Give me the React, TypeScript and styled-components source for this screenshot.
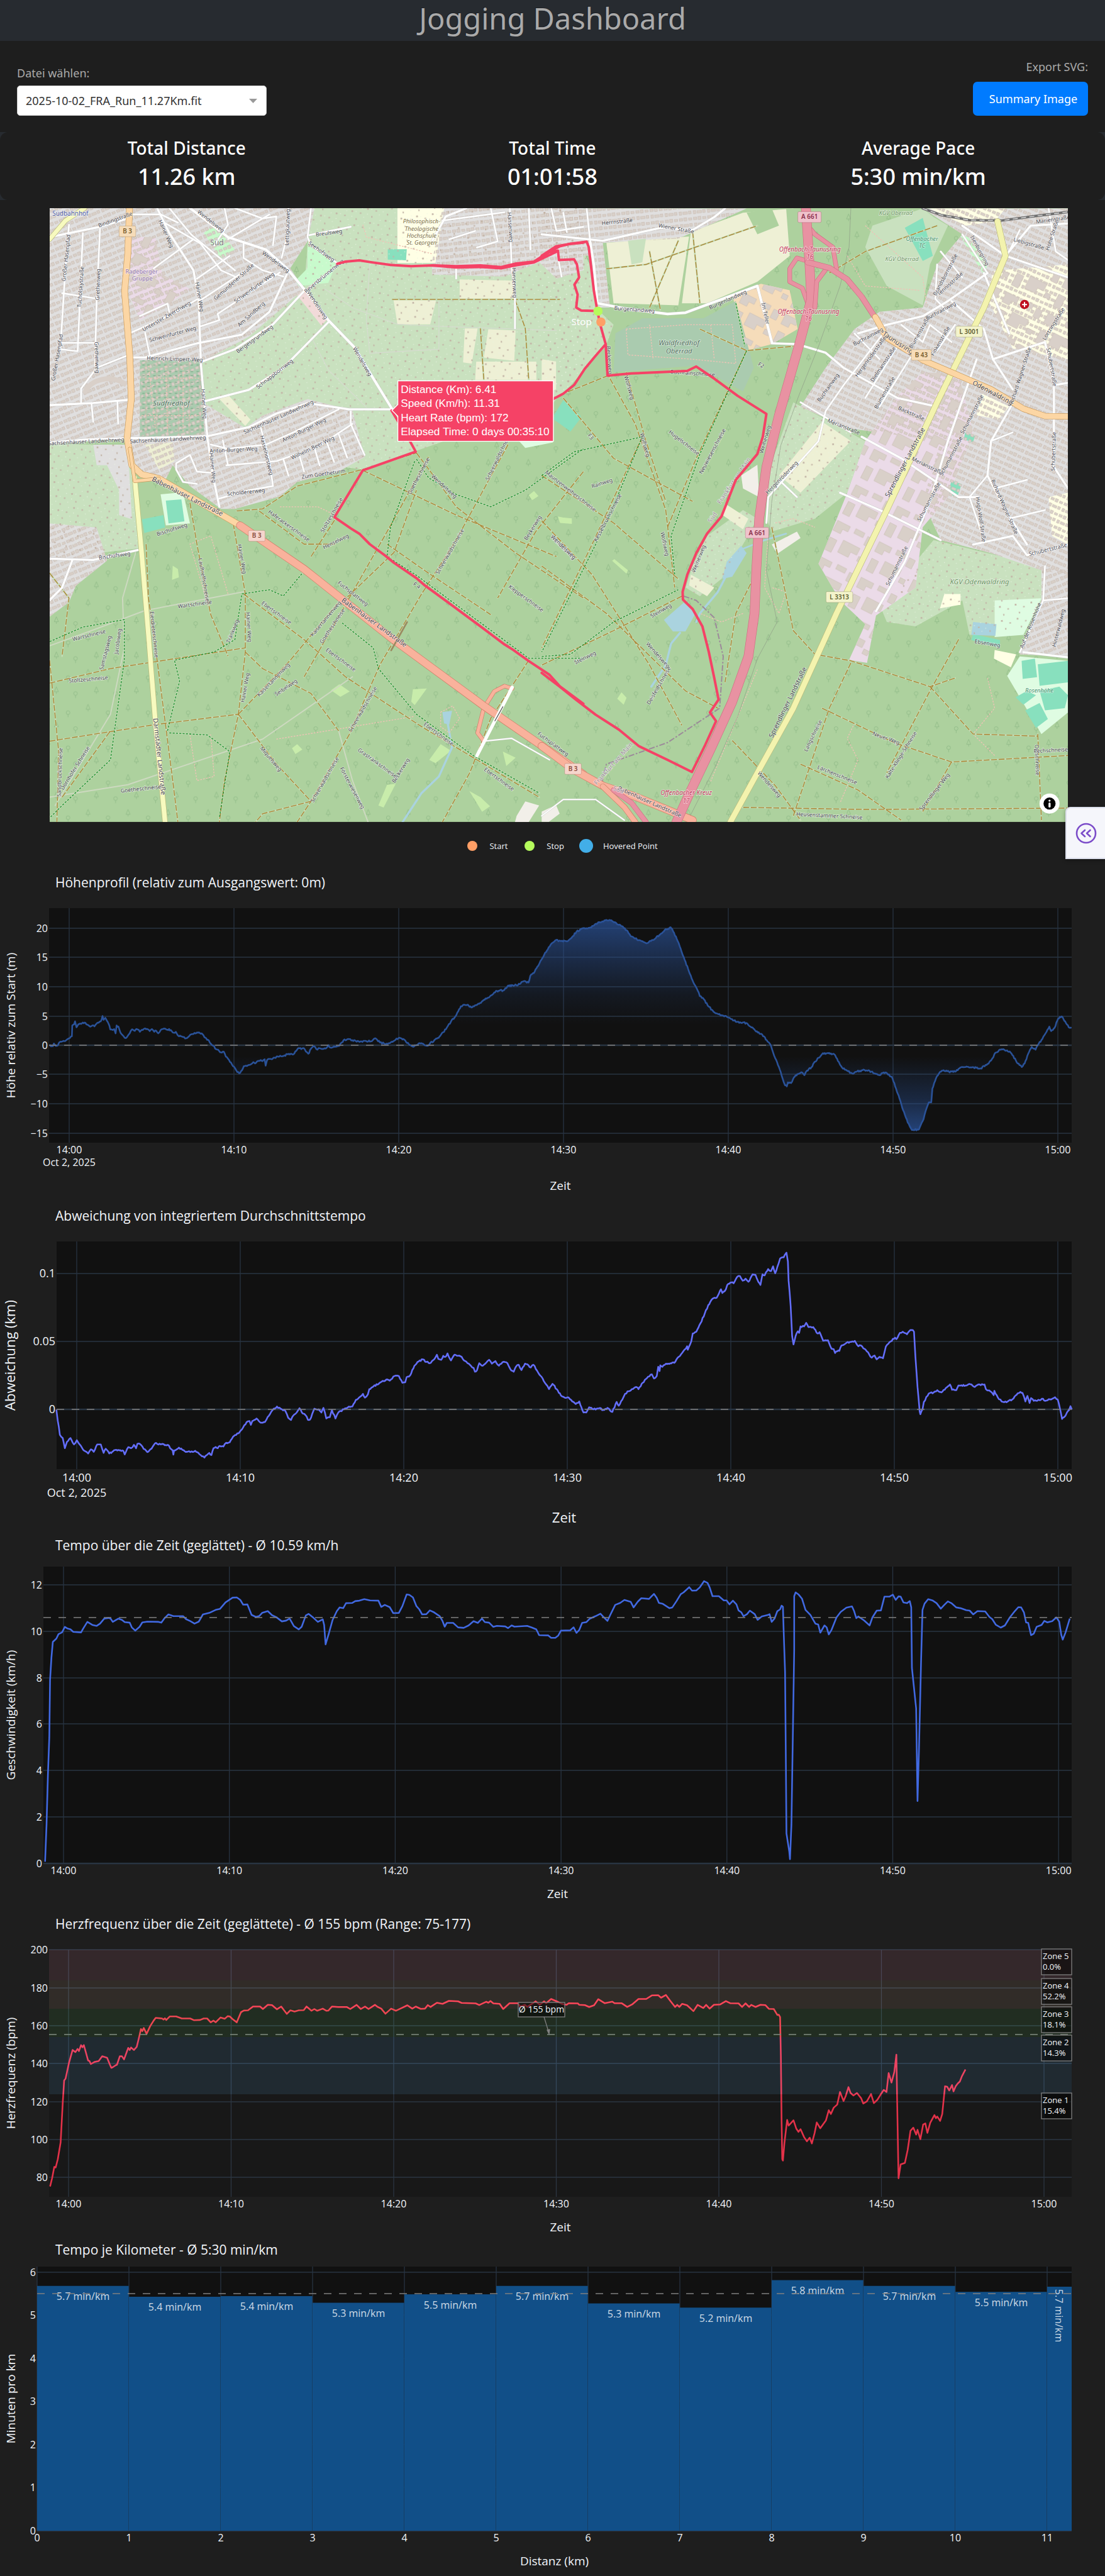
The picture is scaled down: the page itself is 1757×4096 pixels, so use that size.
import React from "react";
import styled, { createGlobalStyle } from "styled-components";

const GlobalStyle = createGlobalStyle`
  *, *::before, *::after { box-sizing: border-box; }
  body {
    margin: 0;
    background: #1e1e1e;
    color: #aaaaaa;
    font-family: "Noto Sans", "Liberation Sans", sans-serif;
    font-size: 18px;
  }
`;

/* ---------- page shell ---------- */

const Page = styled.main`
  position: relative;
  background: #272b30;
`;

const Header = styled.header`
  display: flex;
  justify-content: center;
  height: 65px;
  background: #272b30;
`;

const Title = styled.h1`
  margin: 0;
  font-size: 47px;
  font-weight: 400;
  line-height: 58px;
  color: #aaaaaa;
  text-shadow: -1px -1px 0 rgba(0, 0, 0, 0.3);
`;

const Toolbar = styled.section`
  display: flex;
  justify-content: space-between;
  align-items: flex-end;
  height: 145px;
  padding: 0 27px 26px;
  background: #1e1e1e;
`;

const Field = styled.div<{ $end?: boolean; $gap: number }>`
  display: flex;
  flex-direction: column;
  align-items: ${(p) => (p.$end ? "flex-end" : "flex-start")};
  gap: ${(p) => p.$gap}px;
  line-height: 24px;
`;

const SelectBox = styled.div`
  position: relative;
  width: 397px;
  svg {
    position: absolute;
    right: 15px;
    top: 20px;
    pointer-events: none;
  }
`;

const FileSelect = styled.select`
  appearance: none;
  width: 100%;
  height: 48px;
  padding: 0 13px;
  border: 1px solid #cccccc;
  border-radius: 5px;
  background: #ffffff;
  color: #333333;
  font: inherit;
`;

const ExportButton = styled.button`
  width: 183px;
  height: 54px;
  padding: 0 13px 0 22px;
  border: 0;
  border-radius: 7px;
  background: #007bff;
  color: #ffffff;
  font: inherit;
  white-space: nowrap;
`;

const Stats = styled.section`
  display: grid;
  grid-template-columns: repeat(3, 1fr);
  height: 108px;
  padding: 8px 6px 0;
  border-radius: 13px;
  background: #1e1e1e;
  color: #ffffff;
  text-align: center;
  text-shadow: 1px -1px 0 rgba(0, 0, 0, 0.3);
`;

const StatLabel = styled.h2`
  margin: 0;
  font-size: 28px;
  font-weight: 500;
  line-height: 34px;
`;

const StatValue = styled.p`
  margin: 0;
  font-size: 36px;
  font-weight: 500;
  line-height: 58px;
`;

const MapPanel = styled.section`
  padding: 13px 59px 0 79px;
  background: #1e1e1e;
`;

const MapCanvas = styled.svg`
  display: block;
  width: 100%;
  height: auto;
  font-family: "Noto Sans", sans-serif;
`;

const Legend = styled.ul`
  display: flex;
  justify-content: center;
  align-items: center;
  gap: 24px;
  height: 59px;
  margin: 0;
  padding: 17px 0 0 9px;
  list-style: none;
  color: #f2f5fa;
  font: 13px/20px "Open Sans", sans-serif;
`;

const LegendItem = styled.li`
  display: flex;
  align-items: center;
  gap: 16px;
`;

const Dot = styled.i<{ $color: string; $size: number }>`
  display: block;
  width: ${(p) => p.$size}px;
  height: ${(p) => p.$size}px;
  margin: 0 ${(p) => (22 - p.$size) / 2}px;
  border-radius: 50%;
  background: ${(p) => p.$color};
`;

const ChartPanel = styled.section`
  background: #1e1e1e;
  color: #f2f5fa;
  font-family: "Open Sans", "Noto Sans", sans-serif;
`;

const ChartTitle = styled.h2`
  margin: 0;
  padding: 22px 0 12px 88px;
  font-size: 21px;
  font-weight: 400;
  line-height: 30px;
`;

const ChartCanvas = styled.svg`
  display: block;
  width: 100%;
  height: auto;
  overflow: visible;
  font-family: "Open Sans", "Noto Sans", sans-serif;
  fill: #f2f5fa;
`;

const DrawerButton = styled.button`
  position: absolute;
  top: 1283px;
  right: 0;
  display: grid;
  place-items: center;
  width: 63px;
  height: 83px;
  padding: 0;
  border: 2px solid #dcdfeb;
  border-right: 0;
  border-radius: 8px 0 0 0;
  background: #f5f6fb;
  box-shadow: 0 2px 6px rgba(0, 0, 0, 0.3);
`;

/* ---------- drawing helpers ---------- */

type Frame = [number, number, number, number];
type Pt = [number, number];

const parse = (s: string, [ox, oy, sx, sy]: Frame): Pt[] =>
  s
    .trim()
    .split(/\s+/)
    .map((p) => {
      const [x, y] = p.split(",").map(Number);
      return [ox + x * sx, oy + y * sy];
    });

const toPath = (pts: Pt[]) =>
  "M" + pts.map(([x, y]) => x.toFixed(1) + " " + y.toFixed(1)).join("L");

const random = (seed: number) => () => {
  seed = (seed * 16807) % 2147483647;
  return seed / 2147483647;
};

const roughen = (pts: Pt[], amp: number, step: number): Pt[] => {
  const rnd = random(97);
  const out: Pt[] = [];
  for (let i = 0; i < pts.length - 1; i++) {
    const [x0, y0] = pts[i];
    const [x1, y1] = pts[i + 1];
    out.push(pts[i]);
    const n = Math.floor((x1 - x0) / step);
    for (let k = 1; k < n; k++) {
      const t = k / n;
      out.push([x0 + (x1 - x0) * t, y0 + (y1 - y0) * t + (rnd() - 0.5) * 2 * amp]);
    }
  }
  out.push(pts[pts.length - 1]);
  return out;
};

/* ---------- map ---------- */

const WEST: Frame = [100, 480, 0.8291, 0.9949];
const EAST: Frame = [1300, 480, 0.8622, 1.0332];
const frames = { w: WEST, e: EAST };
type Side = keyof typeof frames;

const areas: [Side, string, string][] = [
  // allotments
  ["w", "#c9e1bf", "780,20 1568,20 1568,400 1480,490 1085,605 930,650 470,600 465,390 760,215 770,110"],
  ["w", "#c9e1bf", "24,590 240,590 270,680 285,840 24,865"],
  ["e", "#c9e1bf", "0,20 60,20 150,180 150,250 200,290 178,340 60,450 0,470"],
  ["e", "#c9e1bf", "635,620 700,470 790,510 900,560 850,680 760,740 640,770 625,740"],
  ["e", "#c9e1bf", "460,780 560,720 600,740 560,800 500,880 440,920 400,900 420,850"],
  ["e", "#c9e1bf", "1090,790 1240,820 1400,850 1390,930 1330,1000 1190,1010 1170,930 1040,990 960,980 940,940 1060,820"],
  ["e", "#c9e1bf", "920,60 1060,20 1090,40 1130,60 1080,150 1060,245 960,200 900,110"],
  // residential
  ["w", "#e0dfdf", "24,20 790,20 770,100 720,165 760,215 600,330 465,390 470,490 590,550 640,520 770,480 900,508 935,620 860,655 740,680 690,715 560,745 520,745 430,690 380,640 350,690 275,650 240,575 24,590"],
  ["w", "#e0dfdf", "24,780 160,790 190,870 100,930 80,970 24,1005"],
  ["w", "#e0dfdf", "150,590 250,590 262,770 225,760 225,700 190,640 160,640"],
  ["w", "#e0dfdf", "1160,20 1568,20 1568,170 1490,190 1440,150 1340,185 1130,180 1130,150"],
  ["e", "#e0dfdf", "0,20 570,20 380,90 170,100 190,250 150,250 130,130 0,120"],
  ["e", "#e0dfdf", "1060,20 1464,20 1464,870 1390,860 1250,820 1110,790 1060,700 1110,560 850,530 720,480 790,390 870,300 940,260 1060,250 1100,150 1170,80"],
  ["e", "#e0dfdf", "1390,850 1464,860 1464,1060 1330,1055 1390,930"],
  // sites, schools, farmland
  ["w", "#ebdbe8", "260,90 330,90 350,180 430,215 370,250 285,290 255,230"],
  ["w", "#f2dad9", "740,230 760,215 830,285 810,303"],
  ["w", "#ffffe5", "1030,20 1165,20 1140,152 1030,152"],
  ["w", "#eef0d5", "1018,238 1142,242 1125,300 1030,300"],
  ["w", "#eef0d5", "1210,192 1368,195 1368,241 1210,240"],
  ["w", "#eef0d5", "1225,310 1262,310 1245,395 1220,392"],
  ["w", "#eef0d5", "1293,312 1372,315 1368,388 1280,380"],
  ["w", "#eef0d5", "1258,390 1432,390 1432,434 1255,434"],
  ["w", "#eef0d5", "515,480 540,470 605,530 590,545"],
  ["w", "#eef0d5", "300,590 380,585 385,630 340,650"],
  ["w", "#aacbaf", "285,387 460,387 472,565 285,575"],
  ["w", "#c8facc", "470,80 500,60 560,120 520,142"],
  ["w", "#c8facc", "770,110 855,150 830,200 745,208 735,195 770,165"],
  ["w", "#dffce2", "345,710 410,705 430,780 360,785"],
  ["w", "#88e0be", "360,725 405,722 414,775 368,780"],
  ["w", "#88e0be", "291,770 353,760 358,790 298,803"],
  ["w", "#88e0be", "1002,119 1057,119 1055,146 1002,144"],
  ["w", "#88e0be", "1508,487 1560,520 1530,558 1480,528"],
  ["w", "#dffce2", "1380,580 1480,540 1480,585 1400,598"],
  ["e", "#88e0be", "60,465 110,505 80,538 34,500"],
  ["e", "#f5dcba", "530,220 610,195 690,210 712,300 640,335 570,350"],
  ["e", "#eef0d5", "180,100 410,85 380,245 200,240"],
  ["e", "#eef0d5", "415,75 560,30 700,20 720,60 690,130 600,190 460,240 390,240"],
  ["e", "#c9e1bf", "240,95 290,90 280,145 250,150"],
  ["e", "#add19e", "570,30 640,20 660,60 600,80"],
  ["e", "#add19e", "680,20 730,20 735,120 690,130"],
  ["e", "#eef0d5", "780,515 860,560 720,680 660,640"],
  ["e", "#f2efe9", "640,800 710,770 720,785 655,822"],
  ["e", "#f2efe9", "555,640 600,615 605,690 560,670"],
  ["e", "#eef0d5", "510,705 575,740 560,765 500,730"],
  ["e", "#eef0d5", "415,870 480,900 460,920 410,895"],
  ["e", "#eef0d5", "0,370 40,375 40,440 0,450"],
  ["e", "#aacbaf", "205,310 280,275 450,275 540,235 590,390 560,445 430,385 200,400"],
  ["e", "#ebdbe8", "1060,400 1160,405 1200,540 1130,690 1060,760 1040,900 930,965 905,1075 855,1068 900,985 830,930 770,845 850,680 900,560 990,455"],
  ["e", "#ffffe5", "1255,165 1464,150 1464,370 1400,360 1310,345 1240,230"],
  ["e", "#ffffe5", "1225,450 1300,480 1270,510 1210,500"],
  ["e", "#ffffe5", "1410,690 1464,680 1464,800 1420,780"],
  ["e", "#ffffe5", "1120,915 1165,915 1165,940 1108,948"],
  ["e", "#ffffe5", "1260,1045 1320,1055 1305,1085 1258,1065"],
  ["e", "#ffffe5", "1080,20 1290,20 1260,50 1180,60"],
  ["e", "#dffce2", "1260,930 1390,925 1340,1010 1260,1015"],
  ["e", "#dffce2", "1330,1060 1464,1070 1464,1190 1390,1240 1295,1105"],
  ["e", "#88e0be", "1335,1070 1372,1065 1378,1108 1338,1112"],
  ["e", "#88e0be", "1380,1078 1464,1070 1464,1120 1385,1128"],
  ["e", "#88e0be", "1345,1185 1385,1168 1408,1205 1375,1226"],
  ["e", "#88e0be", "1385,1140 1440,1130 1464,1150 1455,1180 1400,1185"],
  ["e", "#88e0be", "1318,1155 1350,1140 1375,1150 1340,1172"],
  ["e", "#88e0be", "1010,65 1060,42 1088,130 1060,142"],
  ["e", "#88e0be", "1200,1008 1275,1022 1275,1040 1195,1022"],
  ["e", "#88e0be", "1178,540 1205,548 1200,563 1174,556"],
  ["e", "#88e0be", "1140,652 1168,660 1155,692 1130,680"],
  ["e", "#c8facc", "1165,85 1185,85 1240,150 1230,175"],
  ["w", "#c8ecab", "380,882 395,890 398,910 378,916"],
  ["w", "#c8ecab", "838,1182 862,1168 892,1185 865,1198"],
  ["w", "#c8ecab", "1075,1180 1115,1178 1080,1218 1070,1210"],
  ["w", "#c8ecab", "1155,1312 1185,1328 1140,1358 1122,1350"],
  ["w", "#c8ecab", "1335,1330 1372,1345 1345,1365"],
  ["w", "#c8ecab", "1000,1410 1025,1408 990,1465 975,1460"],
  ["w", "#c8ecab", "725,1322 740,1312 755,1325 735,1336"],
  ["w", "#c8ecab", "1238,1425 1270,1440 1298,1462 1275,1475"],
  ["w", "#c8ecab", "1410,712 1425,702 1438,714 1420,724"],
  ["w", "#c8ecab", "1495,765 1535,768 1530,780 1500,778"],
  ["e", "#c8ecab", "45,735 84,742 84,752 52,750"],
  ["e", "#c8ecab", "196,838 202,834 240,860 236,868"],
  ["e", "#c8ecab", "210,1158 222,1143 236,1156 228,1172"],
  ["w", "#f2efe9", "1375,1485 1400,1450 1440,1460 1410,1500 1370,1500"],
  ["e", "#f2efe9", "0,1420 40,1405 50,1425 20,1444 0,1444"],
  // water
  ["e", "#aad3df", "340,975 395,935 428,960 400,1002 365,1002"],
  ["e", "#aad3df", "515,840 555,803 570,820 530,875 502,880"],
  ["e", "#aad3df", "1200,980 1265,985 1262,1012 1195,1010"],
  ["w", "#aad3df", "1160,1235 1188,1232 1180,1265 1165,1262"],
];

const works =
  "1060,400 1160,405 1200,540 1130,690 1060,760 1040,900 930,965 905,1075 855,1068 900,985 830,930 770,845 850,680 900,560 990,455";

const builtUp: [Side, string, string][] = [
  ["w", "houseA", areas[7][2]],
  ["w", "houseB", areas[10][2]],
  ["w", "houseA", areas[8][2]],
  ["w", "shed", areas[0][2]],
  ["w", "shed", areas[1][2]],
  ["e", "shed", areas[2][2]],
  ["e", "houseB", areas[11][2]],
  ["e", "houseC", areas[12][2]],
  ["e", "houseA", areas[13][2]],
  ["e", "shed", areas[3][2]],
  ["e", "shed", areas[4][2]],
  ["e", "shed", areas[5][2]],
  ["e", "works", works],
  ["e", "works", "1255,165 1464,150 1464,370 1400,360 1310,345 1240,230"],
  ["w", "works", "260,90 330,90 350,180 430,215 370,250 285,290 255,230"],
  ["w", "graves", "285,387 460,387 472,565 285,575"],
  ["e", "works", "530,220 610,195 690,210 712,300 640,335 570,350"],
];

const streets: [Side, number, string][] = [
  ["w", 5, "24,90 170,65 250,45"],
  ["w", 4, "80,60 70,160 55,360 105,365 120,80"],
  ["w", 4, "170,65 160,240 155,400"],
  ["w", 4, "60,225 160,238"],
  ["w", 4, "55,345 155,345"],
  ["w", 5, "24,495 150,490 255,482"],
  ["w", 4, "115,490 115,455 160,405 250,375"],
  ["w", 5, "24,585 130,578 245,575 480,570 600,548 680,515 770,490 890,505 1010,505"],
  ["w", 5, "335,20 370,80 440,170 455,240 462,400 480,570 495,660 515,740"],
  ["w", 4, "265,35 345,35 395,55"],
  ["w", 4, "345,50 460,105 520,170 560,185"],
  ["w", 4, "325,165 440,95"],
  ["w", 4, "370,20 435,85 560,170"],
  ["w", 6, "430,20 540,90 650,120 710,165 765,220 830,290 905,355 960,430 1015,505"],
  ["w", 4, "500,110 540,60 530,20"],
  ["w", 4, "540,95 660,35"],
  ["w", 4, "560,20 640,45 680,40 670,110"],
  ["w", 4, "585,105 585,140 640,170 700,185"],
  ["w", 4, "450,190 545,135"],
  ["w", 4, "455,245 600,165"],
  ["w", 4, "460,305 515,290 510,275 690,175"],
  ["w", 5, "250,380 300,380 455,345 580,325 660,270 710,180"],
  ["w", 5, "465,390 560,360 670,300 760,220"],
  ["w", 4, "260,320 380,275 450,240"],
  ["w", 4, "300,320 315,380"],
  ["w", 4, "285,280 365,250 370,270"],
  ["w", 5, "475,485 600,458 700,405 830,295"],
  ["w", 4, "490,590 540,600 650,590 730,560 860,505"],
  ["w", 4, "535,640 680,630 800,595 900,540"],
  ["w", 4, "525,580 540,640"],
  ["w", 4, "635,550 660,630 670,690"],
  ["w", 4, "895,510 895,540 935,615"],
  ["w", 4, "515,720 600,700 670,690"],
  ["w", 4, "450,685 410,680 390,650 390,635 430,615 450,655 490,658"],
  ["w", 4, "700,625 715,665"],
  ["w", 4, "745,612 760,655"],
  ["w", 4, "790,597 805,640"],
  ["w", 4, "825,583 847,632"],
  ["w", 4, "860,565 885,622"],
  ["w", 4, "145,490 150,535"],
  ["w", 4, "220,485 222,540"],
  ["w", 5, "24,865 150,868 285,843"],
  ["w", 5, "90,868 60,935 24,965"],
  ["w", 4, "715,20 710,90 695,140"],
  ["w", 4, "780,20 770,90 780,110 860,155"],
  ["w", 4, "775,85 895,65"],
  ["w", 4, "860,155 770,215"],
  ["w", 5, "1130,100 1170,40 1230,20"],
  ["w", 4, "1180,95 1255,75"],
  ["w", 4, "1160,50 1340,30"],
  ["w", 4, "1260,115 1320,100 1300,20"],
  ["w", 4, "1355,20 1360,160 1370,230 1370,310"],
  ["w", 4, "1410,20 1415,120"],
  ["w", 4, "1475,20 1490,75 1568,65"],
  ["w", 4, "1490,120 1505,185"],
  ["w", 4, "1200,160 1200,190"],
  ["e", 5, "0,80 170,95 330,65 420,70 480,40 510,20"],
  ["e", 6, "135,98 145,150 155,240 230,252 350,265 400,262 600,200 640,330"],
  ["e", 4, "60,30 70,75"],
  ["e", 4, "125,20 135,98"],
  ["e", 5, "640,333 710,335 790,355 840,390 990,460 1100,480"],
  ["e", 5, "880,310 960,290 1060,270 1130,235 1240,170"],
  ["e", 5, "830,680 940,720 1110,790"],
  ["e", 5, "890,550 1000,600 1160,690 1215,690"],
  ["e", 5, "1210,370 1130,560 1080,700 1010,840 930,955"],
  ["e", 4, "1170,80 1240,170"],
  ["e", 5, "1170,60 1290,130 1360,60 1464,55"],
  ["e", 5, "1290,130 1464,180"],
  ["e", 4, "1330,70 1300,120"],
  ["e", 4, "1410,20 1430,120 1464,140"],
  ["e", 5, "1140,235 1230,300 1255,370 1310,440"],
  ["e", 4, "1100,150 1095,230 1130,260"],
  ["e", 4, "1110,120 1170,180"],
  ["e", 5, "1230,170 1300,310"],
  ["e", 5, "1255,370 1400,330 1425,430 1464,425"],
  ["e", 5, "1305,480 1250,560 1240,640 1290,720 1350,800"],
  ["e", 5, "1425,430 1425,620 1464,670"],
  ["e", 4, "1240,640 1190,690 1230,790"],
  ["e", 4, "1260,670 1350,650"],
  ["e", 4, "1300,740 1400,720"],
  ["e", 5, "1200,800 1310,780 1350,825 1464,800"],
  ["e", 4, "1250,560 1310,540"],
  ["e", 5, "1340,1050 1464,1062"],
  ["e", 4, "1400,850 1395,930 1464,925"],
  ["e", 4, "1395,930 1330,1050"],
  ["e", 4, "870,310 940,370"],
  ["e", 4, "950,310 840,430 790,490 770,560 630,690 625,750"],
  ["e", 4, "990,340 900,460"],
  ["e", 4, "1030,360 940,480"],
  ["e", 4, "1000,290 1060,330 1080,290 1140,330"],
  ["e", 4, "1150,290 1100,350"],
  ["e", 4, "720,470 860,540"],
  ["e", 4, "660,650 710,690"],
  ["e", 3, "0,1430 60,1392 150,1392 230,1440"],
  ["w", 3, "1280,1305 1360,1298 1470,1350"],
];

const tracks: [Side, string][] = [
  ["w", "565,750 640,745 740,690 930,650 1085,610"],
  ["w", "930,652 1200,760 1490,860"],
  ["w", "1085,610 1130,660 1200,740 1370,850 1568,960"],
  ["w", "1350,590 1200,820 1100,950 980,1120 890,1290 780,1450 740,1500"],
  ["w", "1568,655 1430,800 1320,960"],
  ["w", "1120,620 1000,800 870,990 760,1150"],
  ["w", "555,780 590,950 590,1090 570,1240 530,1400 515,1500"],
  ["w", "630,750 760,830 850,830"],
  ["w", "585,950 760,1060 880,1150 1100,1270 1440,1440"],
  ["w", "24,1165 200,1130 590,1080"],
  ["w", "24,1305 330,1265 570,1240"],
  ["w", "303,830 310,960 335,1110 380,1400 395,1500"],
  ["w", "430,730 450,830 490,1000 540,1100"],
  ["w", "570,1240 680,1360 780,1450"],
  ["w", "24,900 80,960 60,1100"],
  ["w", "24,1110 50,1330 45,1500"],
  ["w", "590,1090 640,1130 780,1190 860,1280"],
  ["w", "1410,1110 1300,1250 1240,1380 1160,1500"],
  ["w", "780,1450 640,1480 620,1500"],
  ["w", "60,1440 200,1280"],
  ["w", "570,1240 720,1110 870,960"],
  ["w", "870,970 1020,850 1085,700"],
  ["w", "1000,830 1120,900 1300,1000"],
  ["w", "780,860 850,770"],
  ["w", "1370,240 1400,310 1410,434"],
  ["w", "1015,240 1500,240"],
  ["w", "1270,310 1280,434"],
  ["e", "185,408 60,450"],
  ["e", "180,400 260,520 345,720 370,900"],
  ["e", "235,400 290,560 345,700"],
  ["e", "570,350 430,600 350,760"],
  ["e", "0,640 200,750 380,880"],
  ["e", "60,460 200,600 420,700"],
  ["e", "280,550 140,800 0,1040"],
  ["e", "0,850 180,960 400,1140 490,1180"],
  ["e", "0,745 140,870 300,1080 390,1220"],
  ["e", "390,920 200,1000 0,1080"],
  ["e", "600,860 540,960 510,1120"],
  ["e", "640,760 700,1000 760,1055 860,1070 1080,1130 1150,1110"],
  ["e", "860,1075 800,1180 700,1430"],
  ["e", "780,1180 980,1260 1140,1305 1464,1290"],
  ["e", "1160,1020 1080,1140 960,1330"],
  ["e", "720,1310 880,1370 1000,1440"],
  ["e", "530,1255 650,1360 720,1440"],
  ["e", "1380,1240 1390,1440"],
  ["e", "1080,1130 1200,1240 1380,1245"],
  ["e", "540,1410 900,1415 1464,1412"],
  ["e", "1140,1305 1060,1420"],
  ["e", "180,160 290,150 600,60"],
  ["e", "300,120 330,255"],
  ["e", "420,75 440,240"],
  ["e", "380,95 300,250"],
  ["e", "440,300 570,350 700,340"],
  ["e", "800,170 900,120 1100,60"],
];

const cycleways: [Side, string][] = [
  ["w", "24,1065 120,1030 240,1012 240,1110 200,1350 60,1460 24,1490"],
  ["w", "370,1285 480,1290 545,1330 515,1490"],
  ["w", "365,1280 400,1160 385,1110 500,1090 560,1060 580,950 660,940 700,955 755,900"],
  ["w", "870,1020 960,1080 975,1130 1085,1240 1250,1340 1440,1430"],
  ["w", "1085,625 1120,670 1200,710 1300,740 1400,700 1500,640 1568,600"],
  ["w", "1080,630 1010,790 1000,860 1085,905 1190,970 1410,1105 1568,1105"],
  ["e", "0,640 90,585 280,550"],
  ["e", "280,550 180,750 60,950 0,1050"],
  ["e", "570,350 440,590 360,780 370,870"],
  ["e", "0,1060 80,1055 200,980 380,905"],
  ["e", "540,240 565,340"],
];

const footpaths: [Side, string][] = [
  ["w", "430,1290 450,1400 500,1390 490,1290 440,1290"],
  ["w", "490,1000 430,830 490,810 540,950"],
  ["w", "680,1300 900,1270 1080,1245"],
  ["w", "930,60 940,90 1130,130"],
  ["w", "690,740 800,740 850,760"],
  ["w", "1155,1235 1190,1220 1210,1250 1180,1285 1155,1270 1155,1235"],
  ["w", "310,400 330,550"],
  ["w", "360,400 365,560"],
  ["w", "410,400 410,560"],
  ["w", "300,430 460,430"],
  ["w", "290,520 460,520"],
  ["e", "235,300 400,290 530,290 540,380 420,370 240,360 235,300"],
  ["e", "300,290 310,370"],
  ["e", "470,290 480,370"],
  ["e", "900,60 1060,180 1070,240"],
  ["e", "850,130 900,200 1050,210"],
  ["e", "650,750 700,740 760,760"],
  ["e", "560,960 500,980 440,960"],
  ["e", "630,780 620,900 660,960 680,910 640,900"],
  ["e", "870,1215 850,1250 880,1300 830,1400"],
  ["e", "1240,1110 1260,1180 1200,1240 1260,1290"],
  ["e", "470,1350 600,1090"],
];

const run =
  "178,335 183,408 250,403 330,400 405,397 430,387 480,415 545,455 625,497 615,550 600,590 540,650 500,735 460,775 430,820 405,870 392,910 393,928 420,950 447,990 465,1050 480,1110 492,1160 468,1190 485,1210 455,1265 418,1328 350,1300 270,1268 215,1230 150,1195 95,1160 50,1130 0,1098";

const runTraces: [Side, string][] = [
  ["w", "856,154 880,149 920,146 950,150 1010,157 1070,160 1130,158 1200,160 1270,158 1330,162 1370,154 1425,149 1460,130 1500,112 1530,106 1568,103"],
  ["w", "1130,158 1200,163 1270,162 1330,165 1370,158 1425,151 1490,125"],
  ["e", "0,134 20,122 45,118 48,140 90,138 98,150 104,180 91,197 100,220 96,250 110,257 155,258"],
  ["e", "0,130 40,108 80,102 125,97 131,110 138,160 145,210 155,258 163,290 178,335 150,362 120,392 90,430 60,450 30,463"],
  ["e", run],
  ["w", "1568,1215 1500,1173 1470,1145 1410,1112 1365,1085 1340,1072 1260,1022 1195,982 1110,930 1085,912 1020,875 995,858 950,830 920,805 895,792 848,765 930,652 1083,607 1065,580 1013,508"],
];

const mapLabels: [string, Side, number, number, number, number][] = [
  ["Babenhäuser Landstraße", "w", 422, 716, 27, 16],
  ["Babenhäuser Landstraße", "w", 962, 1020, 36, 16],
  ["Darmstädter Landstraße", "w", 340, 1342, 84, 16],
  ["Eierdieterschneise", "w", 326, 1048, 84, 13],
  ["Sachsenhäuser Landwehrweg", "w", 130, 583, -3, 13],
  ["Sachsenhäuser Landwehrweg", "w", 366, 578, -3, 13],
  ["Sachsenhäuser Landwehrweg", "w", 686, 524, -24, 13],
  ["Heinrich-Limpert-Weg", "w", 386, 384, 2, 13],
  ["Schweinfurter Weg", "w", 380, 324, -15, 13],
  ["Unterster Zwerchweg", "w", 362, 281, -30, 13],
  ["Bergesgrundweg", "w", 617, 336, -36, 13],
  ["Am Sandberg", "w", 607, 276, -42, 13],
  ["Gemündener Straße", "w", 557, 198, -42, 13],
  ["Schweinfurter Weg", "w", 616, 212, -36, 13],
  ["Schnappbornweg", "w", 675, 420, -38, 13],
  ["Wendelsweg", "w", 490, 52, 38, 13],
  ["Wendelsweg", "w", 678, 150, 36, 13],
  ["Wendelsweg", "w", 798, 254, 56, 13],
  ["Wendelsweg", "w", 928, 390, 60, 13],
  ["Hainer Weg", "w", 360, 82, 66, 13],
  ["Hainer Weg", "w", 457, 234, 80, 13],
  ["Hainer Weg", "w", 470, 492, 86, 13],
  ["Hainer Weg", "w", 495, 646, 84, 13],
  ["Hainer Weg", "w", 580, 866, 80, 13],
  ["Hainer Weg", "w", 600, 1030, 86, 13],
  ["Hainer Weg", "w", 590, 1176, -80, 13],
  ["Anton-Burger-Weg", "w", 760, 555, -26, 13],
  ["Anton-Burger-Weg", "w", 556, 603, -3, 13],
  ["Wilhelm-Beer-Weg", "w", 785, 598, -26, 13],
  ["Hasselhorstweg", "w", 651, 616, 76, 13],
  ["Zum Goetheturm", "w", 816, 661, -8, 13],
  ["Scholdererweg", "w", 592, 705, -6, 13],
  ["Bischofsweg", "w", 378, 795, -18, 13],
  ["Bischofsweg", "w", 212, 858, -8, 13],
  ["Wartschneise", "w", 444, 975, -8, 13],
  ["Wartschneise", "w", 138, 1050, -14, 13],
  ["Stoltzeschneise", "w", 136, 1156, -5, 13],
  ["Goetheschneise", "w", 288, 1420, -6, 13],
  ["Dornhöfer Schneise", "w", 98, 1370, -58, 13],
  ["Sandbruckschneise", "w", 54, 1380, -88, 13],
  ["Samstagsweg", "w", 186, 1092, -76, 13],
  ["Jacobiweg", "w", 222, 1064, -82, 13],
  ["Lauftreffschneise", "w", 470, 916, 80, 13],
  ["Haferackerschneise", "w", 716, 786, 36, 13],
  ["Henselweg", "w", 852, 824, -26, 13],
  ["Stoltzeschneise", "w", 840, 760, -60, 13],
  ["Fuchsplattweg", "w", 901, 949, 38, 13],
  ["Fuchsplattweg", "w", 1480, 1312, 36, 13],
  ["Ebertschneise", "w", 680, 996, 36, 13],
  ["Ebertschneise", "w", 866, 1109, 36, 13],
  ["Ebertschneise", "w", 1149, 1288, 36, 13],
  ["Ebertschneise", "w", 1324, 1397, 36, 13],
  ["Kaisertannenweg", "w", 823, 1010, -50, 13],
  ["Kaisertannenweg", "w", 672, 1157, -46, 13],
  ["Goetheschneise", "w", 842, 1028, -56, 13],
  ["Goetheschneise", "w", 1092, 666, -62, 13],
  ["Seibelweg", "w", 708, 1176, -34, 13],
  ["Tränkweg", "w", 554, 1040, -68, 13],
  ["Scheerwaldschneise", "w", 930, 1228, -60, 13],
  ["Scheerwaldschneise", "w", 1182, 848, -60, 13],
  ["Scheerwaldschneise", "w", 1322, 620, -64, 13],
  ["Scheerwaldschneise", "w", 820, 1398, -60, 13],
  ["Beckerweg", "w", 1422, 791, -58, 13],
  ["Beckerweg", "w", 1040, 1376, -58, 13],
  ["Wendelsweg", "w", 1165, 691, 42, 13],
  ["Wendelsweg", "w", 1509, 838, 44, 13],
  ["Klepperschneise", "w", 1402, 961, 36, 13],
  ["Grastränkschneise", "w", 972, 1358, 36, 13],
  ["Försterwiesenweg", "w", 899, 1418, 62, 13],
  ["Miquelsweg", "w", 664, 1348, 50, 13],
  ["F 4", "w", 1086, 930, 32, 13],
  ["Seehofsweg", "w", 810, 125, 36, 13],
  ["Breulsweg", "w", 832, 80, -8, 13],
  ["Reversbrunnenweg", "w", 818, 184, -40, 13],
  ["Tucholskystraße", "w", 114, 210, -86, 13],
  ["Großer Hasenpfad", "w", 72, 140, -84, 13],
  ["Großer Hasenpfad", "w", 46, 380, -80, 13],
  ["Grethenweg", "w", 164, 204, -88, 13],
  ["Grethenweg", "w", 160, 380, 88, 13],
  ["Bindingstraße", "w", 214, 48, -20, 13],
  ["Hansenweg", "w", 1356, 66, 86, 13],
  ["Hansenweg", "w", 1368, 200, 88, 13],
  ["Lettigkautweg", "w", 712, 66, -88, 13],
  ["Wiener Straße", "e", 374, 67, 10, 13],
  ["Herrnstraße", "e", 210, 51, -6, 13],
  ["Burgenlandweg", "e", 258, 255, 4, 13],
  ["Burgenlandweg", "e", 518, 232, -24, 13],
  ["Im Teller", "e", 622, 264, 78, 13],
  ["Buchrainschneise", "e", 420, 403, 4, 13],
  ["Wolfsweg", "e", 243, 436, 74, 13],
  ["Wolfsweg", "e", 287, 569, 74, 13],
  ["Wolfsweg", "e", 342, 799, 78, 13],
  ["Hugelschneise", "e", 396, 564, 38, 13],
  ["Neuwiesenschneise", "e", 475, 584, -62, 13],
  ["Kesselbruchschneise", "e", 184, 738, -62, 13],
  ["Maunzenweiherschneise", "e", 80, 676, 38, 13],
  ["Rainweg", "e", 168, 658, -18, 13],
  ["Wendelsweg", "e", 60, 806, 44, 13],
  ["Wendelsweg", "e", 323, 1057, 48, 13],
  ["Wendelsweg", "e", 633, 1357, 48, 13],
  ["Steinweg", "e", 332, 954, -30, 13],
  ["Steinweg", "e", 121, 1063, -26, 13],
  ["Deisfeldschneise", "e", 326, 1128, -60, 13],
  ["Weiherweg", "e", 622, 556, -74, 13],
  ["Weiherweg", "e", 437, 833, -68, 13],
  ["Hergenröderweg", "e", 668, 645, -46, 13],
  ["Hergenröderstraße", "e", 915, 364, -54, 13],
  ["Dielmannstraße", "e", 950, 382, -56, 13],
  ["Blumenstraße", "e", 954, 448, -60, 13],
  ["Blumenstraße", "e", 1051, 308, -60, 13],
  ["Finkenstraße", "e", 1109, 328, -60, 13],
  ["Buchrainweg", "e", 1110, 258, -28, 13],
  ["Buchrainweg", "e", 908, 318, -28, 13],
  ["Buchrainweg", "e", 797, 436, -54, 13],
  ["Merianstraße", "e", 840, 527, 22, 13],
  ["Merianstraße", "e", 1073, 618, 26, 13],
  ["Backstraße", "e", 1028, 496, 24, 13],
  ["Schumannstraße", "e", 1197, 498, -62, 13],
  ["Schumannstraße", "e", 1139, 595, -62, 13],
  ["Schumannstraße", "e", 1077, 701, -62, 13],
  ["Schumannstraße", "e", 988, 850, -64, 13],
  ["Sprendlinger Landstraße", "e", 1012, 610, -62, 16],
  ["Sprendlinger Landstraße", "e", 686, 1167, -64, 16],
  ["Taunusring", "e", 990, 333, 34, 16],
  ["Odenwaldring", "e", 1254, 449, 28, 16],
  ["Tennisstraße", "e", 1136, 195, -42, 13],
  ["Brandsbornstraße", "e", 1123, 174, -62, 13],
  ["Isenburgring", "e", 1218, 118, 62, 13],
  ["Liebigstraße", "e", 1355, 102, 16, 13],
  ["Hohe Straße", "e", 1420, 82, -72, 13],
  ["Marienstraße", "e", 1422, 46, -8, 13],
  ["Richard-Wagner-Straße", "e", 1332, 408, -72, 13],
  ["Richard-Wagner-Straße", "e", 1287, 713, 66, 13],
  ["Schubertstraße", "e", 1418, 388, 80, 13],
  ["Schubertstraße", "e", 1424, 584, -88, 13],
  ["Schubertstraße", "e", 1408, 812, -14, 13],
  ["Lortzingstraße", "e", 1424, 288, -58, 13],
  ["Hugo-Wolf-Straße", "e", 1221, 742, 82, 13],
  ["Auf der Rosenhöhe", "e", 1360, 988, -68, 13],
  ["Hinterwaldweg", "e", 1438, 994, -76, 13],
  ["Ebsenweg", "e", 1240, 1030, 10, 13],
  ["Langschneise", "e", 755, 1244, -64, 13],
  ["Neuer Weg", "e", 958, 1250, 20, 13],
  ["Lärchenschneise", "e", 822, 1335, 22, 13],
  ["Kalte-Klinge-Schneise", "e", 1000, 1289, -58, 13],
  ["Sprendlinger Weg", "e", 1093, 1374, -52, 13],
  ["Heusenstammer Schneise", "e", 800, 1430, 3, 13],
  ["Ostschneise", "e", 1378, 1300, 88, 13],
  ["Pechschneise", "e", 1416, 1278, -3, 13],
  ["F3", "e", 136, 550, 50, 13],
  ["F2", "e", 610, 384, 30, 13],
  ["Beckerweg", "e", 188, 372, 86, 13],
  ["Babenhäuser Landstraße", "e", 300, 1398, 24, 14],
];

const placeNames: [string, Side, number, number, number, string, boolean][] = [
  ["Süd", "w", 508, 110, 18, "#777777", false],
  ["Radeberger", "w", 290, 178, 14, "#8d6da8", false],
  ["Gruppe", "w", 292, 195, 14, "#8d6da8", false],
  ["Südfriedhof", "w", 376, 496, 17, "#4f6f5b", true],
  ["Philosophisch-", "w", 1100, 57, 14, "#7d7040", true],
  ["Theologische", "w", 1100, 74, 14, "#7d7040", true],
  ["Hochschule", "w", 1100, 91, 14, "#7d7040", true],
  ["St. Georgen", "w", 1100, 108, 14, "#7d7040", true],
  ["Waldfriedhof", "e", 382, 338, 17, "#4f6f5b", true],
  ["Oberrad", "e", 382, 357, 17, "#4f6f5b", true],
  ["KGV Oberrad", "e", 985, 36, 14, "#6a9460", true],
  ["KGV Oberrad", "e", 1002, 142, 14, "#6a9460", true],
  ["KGV Odenwaldring", "e", 1218, 893, 17, "#6a9460", true],
  ["Offenbacher", "e", 1058, 95, 14, "#3a8f68", true],
  ["TC", "e", 1058, 111, 14, "#3a8f68", true],
  ["Rosenhöhe", "e", 1384, 1144, 14, "#3a8f68", true],
  ["Offenbach-Taunusring", "e", 746, 120, 15, "#c4355a", true],
  ["16", "e", 746, 137, 15, "#c4355a", true],
  ["Offenbach-Taunusring", "e", 742, 264, 15, "#c4355a", true],
  ["16", "e", 742, 281, 15, "#c4355a", true],
  ["Offenbacher Kreuz", "e", 402, 1382, 15, "#c4355a", true],
  ["17", "e", 402, 1400, 15, "#c4355a", true],
  ["Südbahnhof", "w", 84, 38, 15, "#4a5aa8", false],
];

const boundaryNames: [string, number, number, number][] = [
  ["Frankfurt am Main", 540, 655, -56],
  ["Süd", 480, 740, -56],
  ["Frankfurt am Main", 204, 1312, -48],
  ["Süd", 212, 1374, 20],
];

const shields: [string, Side, number, number, string, string][] = [
  ["B 3", "w", 249, 76, "#f6dcb8", "#7a5c2c"],
  ["B 3", "w", 623, 810, "#f6d5cc", "#8a4a38"],
  ["B 3", "e", 87, 1321, "#f6d5cc", "#8a4a38"],
  ["A 661", "e", 745, 40, "#efc2cc", "#8a2f4a"],
  ["A 661", "e", 599, 773, "#efc2cc", "#8a2f4a"],
  ["B 43", "e", 1056, 360, "#f6dcb8", "#7a5c2c"],
  ["L 3001", "e", 1189, 306, "#f3f3cb", "#5e5e30"],
  ["L 3313", "e", 828, 922, "#f3f3cb", "#5e5e30"],
];

const Stroke = ({ side, pts, color, width, dash }: { side: Side; pts: string; color: string; width: number; dash?: string }) => (
  <path
    d={toPath(parse(pts, frames[side]))}
    fill="none"
    stroke={color}
    strokeWidth={width}
    strokeDasharray={dash}
    strokeLinejoin="round"
    strokeLinecap={dash ? "butt" : "round"}
  />
);

const Cased = ({ side, pts, fill, edge, width }: { side: Side; pts: string; fill: string; edge: string; width: number }) => (
  <>
    <Stroke side={side} pts={pts} color={edge} width={width + 2} />
    <Stroke side={side} pts={pts} color={fill} width={width} />
  </>
);

const Houses = ({ id, angle }: { id: string; angle: number }) => (
  <pattern id={id} width="34" height="30" patternUnits="userSpaceOnUse" patternTransform={`rotate(${angle})`}>
    <g fill="#d9d0c9" stroke="#c3b5aa" strokeWidth="0.8">
      <rect x="2" y="3" width="8" height="6" />
      <rect x="13" y="2" width="7" height="8" />
      <rect x="24" y="4" width="8" height="5" />
      <rect x="3" y="17" width="6" height="8" />
      <rect x="12" y="18" width="11" height="6" />
      <rect x="26" y="17" width="6" height="7" />
    </g>
  </pattern>
);

const tooltipLines = [
  "Distance (Km): 6.41",
  "Speed (Km/h): 11.31",
  "Heart Rate (bpm): 172",
  "Elapsed Time: 0 days 00:35:10",
];

const RouteMap = () => (
  <MapCanvas viewBox="120 500 2442 1472" role="img" aria-label="Laufstrecke">
    <defs>
      <Houses id="houseA" angle={-22} />
      <Houses id="houseB" angle={-6} />
      <Houses id="houseC" angle={24} />
      <pattern id="shed" width="38" height="34" patternUnits="userSpaceOnUse" patternTransform="rotate(-8)">
        <g fill="#c2b3a5">
          <rect x="5" y="6" width="4" height="4" />
          <rect x="24" y="14" width="4" height="3" />
          <rect x="12" y="26" width="3" height="4" />
        </g>
        <g fill="#e8f4e2">
          <circle cx="16" cy="10" r="1" />
          <circle cx="32" cy="5" r="1" />
          <circle cx="4" cy="20" r="1" />
          <circle cx="32" cy="26" r="1" />
        </g>
      </pattern>
      <pattern id="works" width="112" height="96" patternUnits="userSpaceOnUse" patternTransform="rotate(27)">
        <g fill="#d9d0c9" stroke="#cbbeb6" strokeWidth="1">
          <path d="M6 8h34v14h-14v12h-20z" />
          <rect x="54" y="6" width="24" height="12" />
          <rect x="88" y="10" width="16" height="22" />
          <rect x="8" y="52" width="18" height="32" />
          <path d="M40 44h44v18h-16v14h-28z" />
          <rect x="90" y="62" width="14" height="12" />
        </g>
      </pattern>
      <pattern id="graves" width="26" height="26" patternUnits="userSpaceOnUse">
        <path d="M4 8h6M16 8h6M4 18h6M16 18h6" stroke="#7fae8c" strokeWidth="2" />
        <path d="M13 0v26" stroke="#e7a79f" strokeWidth="1" strokeDasharray="3 2" />
      </pattern>
      <pattern id="trees" width="96" height="84" patternUnits="userSpaceOnUse">
        <g fill="none" stroke="#8fb986" strokeWidth="1.3">
          <path d="M20 10l-5 12h10zM20 22v5" />
          <circle cx="68" cy="30" r="4.5" />
          <path d="M68 34v7" />
          <path d="M40 52l-5 12h10zM40 64v5" />
          <circle cx="86" cy="68" r="4.5" />
          <path d="M86 72v7" />
        </g>
      </pattern>
    </defs>

    <rect x="120" y="500" width="2442" height="1472" fill="#add19e" />
    <rect x="120" y="500" width="2442" height="1472" fill="url(#trees)" />
    {areas.map(([side, fill, pts], i) => (
      <path key={i} d={toPath(parse(pts, frames[side])) + "Z"} fill={fill} />
    ))}
    {builtUp.map(([side, id, pts], i) => (
      <path key={i} d={toPath(parse(pts, frames[side])) + "Z"} fill={`url(#${id})`} />
    ))}

    <Stroke side="e" pts="515,870 490,910 440,960 430,980" color="#aad3df" width={5} />
    <Stroke side="e" pts="560,810 620,790 680,775" color="#aad3df" width={4} />
    <Stroke side="e" pts="385,1005 360,1030 345,1080 305,1130" color="#aad3df" width={5} />
    <Stroke side="w" pts="1175,1260 1188,1320 1150,1390 1100,1430 1045,1500" color="#aad3df" width={5} />
    <path d="M204 944a58 44 0 0 1 100-20" fill="none" stroke="#d9d0c9" strokeWidth="12" />

    {footpaths.map(([side, pts], i) => (
      <Stroke key={i} side={side} pts={pts} color="#efc3b6" width={2} dash="4 3" />
    ))}
    <Stroke side="w" pts="24,1075 140,1040 300,990 585,945" color="#cdd9c0" width={3} />
    <Stroke side="w" pts="24,1440 250,1410 640,1300 900,1150" color="#cdd9c0" width={3} />
    <Stroke side="w" pts="273,850 235,960 240,1080 200,1240 40,1460" color="#cdd9c0" width={3} />
    <Stroke side="w" pts="860,1280 900,1400 945,1500" color="#cdd9c0" width={3} />
    <Stroke side="w" pts="820,215 900,260 1030,300 1150,305 1490,315" color="#d5dcce" width={2} />
    <Stroke side="w" pts="950,150 940,290 950,370 1150,360 1150,240" color="#d5dcce" width={2} />
    <Stroke side="w" pts="780,330 830,410 940,500" color="#d5dcce" width={2} />
    {[...tracks, ...cycleways].map(([side, pts], i) => (
      <Stroke key={i} side={side} pts={pts} color="#c4dcb5" width={4} />
    ))}
    {tracks.map(([side, pts], i) => (
      <Stroke key={i} side={side} pts={pts} color="#ac8331" width={2} dash="14 4" />
    ))}
    {cycleways.map(([side, pts], i) => (
      <Stroke key={i} side={side} pts={pts} color="#1f9130" width={2} dash="5 3" />
    ))}
    <Stroke side="e" pts="395,920 430,930 480,970 505,1060 495,1180 350,1260 180,1310 165,1360" color="#9c8a9a" width={3} dash="14 4 4 4" />

    {streets.map(([side, w, pts], i) => (
      <Stroke key={"c" + i} side={side} pts={pts} color="#c4c4c4" width={w + 1} />
    ))}
    {streets.map(([side, w, pts], i) => (
      <Stroke key={i} side={side} pts={pts} color="#ffffff" width={w} />
    ))}

    <Stroke side="e" pts="1060,20 1110,35 1190,47 1280,48 1370,38 1464,28" color="#6f6f6f" width={6} />
    <Stroke side="e" pts="1060,20 1110,35 1190,47 1280,48 1370,38 1464,28" color="#dddddd" width={2} dash="12 8" />
    <Stroke side="e" pts="860,20 855,110 830,200 770,340 715,455 665,570 640,700 625,860 655,980 600,1065 545,1200 480,1320 410,1435" color="#8d9a86" width={1} />

    <Cased side="w" pts="270,670 290,850 310,1050 330,1260 358,1500" fill="#f7fabf" edge="#b9b97a" width={11} />
    <Cased side="e" pts="1268,50 1290,130 1230,250 1100,470 960,720 820,960 700,1180 600,1330 525,1444" fill="#f3f3ae" edge="#b9b97a" width={13} />
    <Cased side="w" pts="24,95 70,50 125,20" fill="#f7fabf" edge="#b9b97a" width={10} />
    <Cased side="w" pts="255,20 250,130 241,220 256,380 260,480 248,575 262,640 290,662 340,672 575,785" fill="#fcd6a4" edge="#c99b5c" width={14} />
    <Cased side="w" pts="256,600 270,678 340,672" fill="#fcd6a4" edge="#c99b5c" width={7} />
    <Cased side="w" pts="1280,1305 1262,1285 1280,1225 1310,1185 1340,1172 1362,1178" fill="#f9b29c" edge="#cd7d67" width={8} />
    <Cased side="w" pts="575,785 760,890 1010,1055 1280,1220 1568,1385" fill="#f9b29c" edge="#cd7d67" width={17} />
    <Cased side="e" pts="0,1268 87,1322 170,1360 260,1385 420,1440" fill="#f9b29c" edge="#cd7d67" width={17} />
    <Cased side="e" pts="170,1362 230,1410 260,1444" fill="#f9b29c" edge="#cd7d67" width={12} />
    <Cased side="e" pts="740,60 760,80 810,110 820,160" fill="#e892a2" edge="#cf6d82" width={9} />
    <Cased side="e" pts="750,145 710,135 690,160 690,190 725,205 740,240" fill="#e892a2" edge="#cf6d82" width={9} />
    <Cased side="e" pts="735,20 745,150 750,230 715,340 660,500 625,620 605,740 597,860 592,960 575,1060 530,1165 470,1275 410,1380 375,1444" fill="#e892a2" edge="#cf6d82" width={21} />
    <Cased side="e" pts="760,250 765,190 790,162" fill="#e892a2" edge="#cf6d82" width={9} />
    <Cased side="e" pts="740,145 800,158 850,185 890,225 925,270" fill="#e892a2" edge="#cf6d82" width={12} />
    <Cased side="e" pts="200,1370 250,1400 290,1444" fill="#e892a2" edge="#cf6d82" width={11} />
    <Cased side="e" pts="928,272 960,320 1060,372 1250,440 1340,485 1400,502 1464,503" fill="#fcd6a4" edge="#c99b5c" width={13} />
    <Stroke side="w" pts="1362,1175 1260,1340" color="#ffffff" width={8} />
    <Stroke side="w" pts="1335,1222 1312,1256" color="#555555" width={2} />
    <Stroke side="w" pts="1058,1018 1012,1086" color="#9b8a60" width={4} />

    <g fill="#46464e" stroke="#ffffff" strokeWidth="2" strokeOpacity="0.65" paintOrder="stroke" textAnchor="middle">
      {mapLabels.map(([text, side, x, y, angle, size], i) => {
        const [[px, py]] = parse(`${x},${y}`, frames[side]);
        return (
          <text key={i} fontSize={size} transform={`translate(${px} ${py}) rotate(${angle})`} dy="4">
            {text}
          </text>
        );
      })}
      {boundaryNames.map(([text, x, y, angle], i) => {
        const [[px, py]] = parse(`${x},${y}`, EAST);
        return (
          <text key={i} fontSize="15" fill="#9c8a9a" transform={`translate(${px} ${py}) rotate(${angle})`}>
            {text}
          </text>
        );
      })}
      {placeNames.map(([text, side, x, y, size, color, italic], i) => {
        const [[px, py]] = parse(`${x},${y}`, frames[side]);
        return (
          <text key={i} x={px} y={py} fontSize={size} fill={color} fontStyle={italic ? "italic" : "normal"}>
            {text}
          </text>
        );
      })}
    </g>
    {shields.map(([text, side, x, y, fill, ink], i) => {
      const [[px, py]] = parse(`${x},${y}`, frames[side]);
      const w = text.length * 8 + 16;
      return (
        <g key={i}>
          <rect x={px - w / 2} y={py - 13} width={w} height={26} rx={3} fill={fill} stroke={ink} strokeOpacity="0.4" />
          <text x={px} y={py + 5} fontSize="15" fontWeight="600" fill={ink} textAnchor="middle">
            {text}
          </text>
        </g>
      );
    })}

    <circle cx="2458" cy="731" r="11" fill="#bf0f1e" />
    <path d="M2458 725v12M2452 731h12" stroke="#fff" strokeWidth="3" />

    {runTraces.map(([side, pts], i) => (
      <Stroke key={i} side={side} pts={pts} color="#f54266" width={6} />
    ))}
    <text x="1371" y="780" fontSize="23" fill="#ffffff">Stop</text>
    <circle cx="1442" cy="773" r="11" fill="#ff9f66" />
    <circle cx="1435" cy="747" r="11" fill="#b5fb5c" />

    <path d="M955 914H1328V1059H955V999L941 985L955 971Z" fill="#f54266" stroke="#ffffff" strokeWidth="2" />
    <g fontFamily='"Liberation Sans", sans-serif' fontSize="26" fill="#ffffff">
      {tooltipLines.map((line, i) => (
        <text key={line} x="962" y={943 + i * 34}>{line}</text>
      ))}
    </g>

    <circle cx="2518" cy="1928" r="24" fill="#ffffff" />
    <circle cx="2518" cy="1928" r="14.5" fill="#000000" />
    <circle cx="2518" cy="1921" r="2.5" fill="#ffffff" />
    <path d="M2518 1928v7" stroke="#fff" strokeWidth="5" strokeLinecap="round" />
  </MapCanvas>
);

/* ---------- charts ---------- */

const GRID = "#283442";
const HEAD = 64;
const times = ["14:00", "14:10", "14:20", "14:30", "14:40", "14:50", "15:00"];

type PlotProps = {
  title: string;
  height: number;
  box: [number, number, number, number];
  xStart: number;
  xStep: number;
  xLabels: string[];
  yTicks: [string, number][];
  tickSize?: number;
  titleSize?: number;
  tickY: number;
  date?: number;
  xTitle: string;
  xTitleY: number;
  yTitle: string;
  children: React.ReactNode;
};

const Plot = (p: PlotProps) => {
  const [l, t, r, b] = p.box;
  const tick = p.tickSize ?? 16;
  const name = p.titleSize ?? 19;
  return (
    <ChartPanel>
      <ChartTitle>{p.title}</ChartTitle>
      <ChartCanvas viewBox={`0 ${HEAD} 1757 ${p.height - HEAD}`} role="img" aria-label={p.title}>
        <rect x={l} y={t} width={r - l} height={b - t} fill="#111111" />
        <g stroke={GRID} strokeWidth="1.3">
          {p.xLabels.map((x, i) => (
            <path key={x} d={`M${p.xStart + i * p.xStep} ${t}V${b}`} />
          ))}
          {p.yTicks.map(([label, y]) => (
            <path key={label} d={`M${l} ${y}H${r}`} strokeWidth={label === "0" ? 2.6 : 1.3} />
          ))}
        </g>
        {p.children}
        <g fontSize={tick} textAnchor="middle">
          {p.xLabels.map((x, i) => (
            <text key={x} x={p.xStart + i * p.xStep} y={p.tickY}>{x}</text>
          ))}
          {p.date && <text x={p.xStart} y={p.date}>Oct 2, 2025</text>}
        </g>
        <g fontSize={tick} textAnchor="end">
          {p.yTicks.map(([label, y]) => (
            <text key={label} x={l - 2} y={y + tick * 0.36}>{label}</text>
          ))}
        </g>
        <g fontSize={name} textAnchor="middle">
          <text x={(l + r) / 2} y={p.xTitleY}>{p.xTitle}</text>
          <text transform={`translate(24 ${(t + b) / 2}) rotate(-90)`}>{p.yTitle}</text>
        </g>
      </ChartCanvas>
    </ChartPanel>
  );
};

const Dashed = ({ y, from, to }: { y: number; from: number; to: number }) => (
  <path d={`M${from} ${y}H${to}`} stroke="#808080" strokeWidth="1.3" strokeDasharray="12 12" />
);

const Series = ({ d, color }: { d: string; color: string }) => (
  <path d={d} fill="none" stroke={color} strokeWidth="2.6" strokeLinejoin="round" />
);

const elevationA =
  "140,830 150,832 153,820 158,830 164,828 168,815 175,812 180,808 188,805 192,800 196,797 204,788 205,740 210,735 213,722 217,748 222,735 230,733 240,727 245,735 250,738 256,745 262,740 268,744 272,735 280,728 286,722 291,698 294,715 299,706 303,718 308,732 313,758 320,760 324,756 328,775 331,740 336,745 342,772 348,783 354,795 360,792 368,775 375,757 380,762 390,757 397,768 405,760 412,753 420,757 425,765 431,756 438,768 443,763 449,775 456,760 470,755 485,760 493,772 499,768 508,788 513,787 520,791 528,797 535,790 545,778 552,773 562,772 572,775 580,792 590,803 598,820 605,830 613,845 622,853 630,860 635,856 641,878 650,893 658,912 664,922 671,940 679,952 687,938 692,920 698,918 703,917 712,912 719,902 724,908 732,897 740,893 745,898 751,890 754,918 758,893 765,888 775,885 790,878 805,875 820,865 833,868 838,855 847,840 855,845 862,840 868,855 875,865 885,838 892,832 898,845 910,842 925,842 932,827 938,838 948,832 963,830 970,815 975,805 988,800 1000,805 1020,813 1037,808 1055,810 1062,798 1070,803 1078,815 1090,820 1100,822 1112,812 1125,798 1137,796 1150,806 1160,822 1170,832 1180,828 1190,818 1198,820 1206,828 1213,830 1222,815 1230,812 1240,798 1250,785 1258,770 1268,750 1280,722 1290,705 1298,683 1308,655 1320,649 1330,652 1340,660 1350,650 1365,640 1378,620 1390,612 1400,600 1410,587 1428,585 1440,567 1455,562 1470,561 1485,545 1500,550 1505,520 1515,508 1525,480 1537,448 1547,418 1560,390 1567,375";
const elevationB =
  "2,372 8,363 20,364 35,365 43,367 55,350 68,325 82,312 95,310 105,308 118,297 133,283 150,274 167,274 180,285 195,300 210,318 222,345 230,350 245,362 258,370 270,375 280,366 290,357 303,340 318,318 325,315 335,305 345,330 358,375 370,430 385,490 400,550 412,585 418,610 430,625 440,650 455,675 468,688 485,697 500,705 515,718 530,728 550,729 562,745 575,762 595,780 608,805 620,830 632,885 645,935 653,975 660,1005 665,1010 668,992 677,995 685,970 695,955 706,947 715,960 722,940 735,925 745,900 755,883 765,867 780,862 800,868 810,897 822,927 838,942 850,952 862,945 880,938 897,938 910,950 928,960 940,948 955,957 965,975 975,1020 985,1065 995,1115 1008,1170 1020,1203 1040,1200 1053,1155 1062,1105 1068,1080 1075,1080 1078,1020 1088,975 1100,945 1110,938 1125,945 1145,943 1160,925 1175,922 1190,926 1215,930 1232,915 1245,895 1257,860 1275,845 1290,850 1300,860 1315,895 1325,915 1332,924 1340,908 1350,865 1360,835 1371,847 1380,820 1390,800 1402,768 1410,745 1415,765 1425,750 1435,710 1445,700 1455,722 1465,748 1473,750";
const deviation =
  "80,986 82,1040 85,1105 89,1120 92,1168 95,1138 100,1120 105,1150 109,1130 113,1150 118,1175 125,1193 129,1173 133,1185 138,1150 143,1150 147,1190 150,1170 155,1193 165,1175 175,1180 177,1197 182,1163 186,1168 190,1152 193,1168 195,1147 200,1152 204,1172 209,1186 215,1170 220,1145 228,1150 238,1152 245,1178 246,1198 247,1178 254,1165 262,1182 270,1186 277,1180 283,1196 290,1212 297,1190 300,1200 303,1168 306,1162 309,1168 312,1157 317,1160 321,1142 326,1140 332,1110 340,1092 345,1070 350,1045 354,1040 356,1058 358,1040 364,1028 370,1048 376,1045 380,1020 387,988 393,972 400,985 405,993 409,1025 413,1035 416,1015 421,1000 425,980 430,1005 435,1018 437,1035 440,1033 446,982 452,985 456,1000 459,978 463,1028 468,1022 471,988 476,1028 480,1000 488,985 495,972 500,972 505,940 510,928 515,912 518,930 522,915 524,890 530,877 540,858 548,845 553,850 560,828 566,828 571,860 575,858 577,833 582,825 588,780 594,760 600,750 605,762 610,768 616,750 620,728 622,748 626,752 629,733 632,738 635,722 640,755 645,728 650,733 655,738 660,758 665,770 672,790 674,808 677,800 680,768 685,780 690,765 694,752 698,770 703,758 708,780 713,763 720,768 724,795 729,808 732,785 736,775 740,800 745,770 750,778 753,788 757,775 762,803 770,840 775,868 779,890 784,865 790,890 796,920 801,930 807,930 812,948 817,960 822,948 828,1000 832,1000 836,975 842,985 850,980 856,988 862,978 866,992 869,997 875,950 878,968 883,940 887,912 892,900 898,890 903,880 906,890 912,860 918,838 925,820 928,840 932,828 934,785 936,805 937,778 940,785 945,770 957,766 963,738 970,710 975,688 976,705 981,665 983,628 988,620 994,580 1000,535 1005,495 1011,465 1017,460 1023,420 1025,438 1030,420 1032,400 1038,388 1041,392 1046,362 1050,358 1054,380 1058,370 1062,385 1068,350 1072,352 1076,385 1079,400 1082,350 1085,355 1087,340 1090,325 1094,335 1097,312 1100,345 1103,315 1107,275 1112,270 1116,248 1118,290 1119,380 1122,500 1124,640 1126,680 1129,640 1132,618 1134,625 1136,595 1141,595 1144,578 1147,598 1154,598 1160,628 1163,622 1168,662 1175,660 1180,700 1183,702 1185,720 1188,712 1191,710 1194,685 1200,675 1206,668 1213,663 1218,688 1222,685 1230,712 1237,742 1241,732 1244,750 1248,738 1253,745 1257,690 1264,665 1270,648 1272,655 1277,625 1281,620 1287,632 1290,618 1294,612 1297,620 1299,740 1302,880 1305,995 1306,1008 1309,985 1311,950 1318,910 1325,905 1330,895 1336,905 1342,885 1348,868 1351,893 1357,895 1360,873 1370,873 1377,867 1383,880 1390,868 1397,868 1399,890 1408,908 1410,918 1411,898 1416,930 1423,950 1430,948 1438,935 1444,910 1448,903 1451,908 1455,948 1458,922 1461,955 1463,932 1467,945 1475,942 1480,935 1483,945 1490,938 1497,928 1501,940 1504,980 1507,1030 1510,1022 1514,1000 1517,988 1519,970 1521,986";
const speed =
  "64,1348 66,1200 68,1000 70,850 71,620 73,530 75,468 80,455 83,437 88,430 92,408 96,415 100,418 104,428 115,430 118,415 124,388 131,400 137,404 142,395 148,375 154,372 157,375 160,388 168,375 173,380 177,389 184,391 187,410 192,423 198,408 202,390 209,387 225,388 229,391 233,375 239,358 246,365 260,365 264,377 270,385 276,395 282,387 288,358 297,352 306,340 312,336 320,310 330,291 336,290 341,300 345,319 351,318 357,360 363,368 368,364 372,352 380,345 386,361 392,369 400,386 406,383 411,375 417,405 424,418 428,408 434,362 438,356 445,372 451,388 458,378 460,400 462,478 466,440 472,380 478,345 482,330 487,333 491,313 500,312 504,305 510,303 517,297 525,302 537,303 541,328 546,320 553,329 558,353 566,352 571,325 577,278 581,280 586,290 591,325 595,338 599,358 605,357 610,342 616,350 624,365 628,385 631,407 634,392 643,392 650,410 658,412 665,402 672,385 678,392 684,375 688,389 694,391 700,408 705,404 717,406 721,413 726,402 730,407 748,404 755,411 761,418 765,441 778,442 782,452 788,452 792,443 796,423 809,422 814,410 818,432 822,420 826,392 832,389 837,375 845,365 852,355 857,370 862,384 866,360 873,320 880,312 886,300 895,308 899,330 905,307 910,293 921,296 924,287 928,276 932,292 935,312 940,315 950,333 954,330 960,305 966,277 970,270 978,249 982,263 988,262 993,250 999,225 1004,232 1007,250 1011,285 1020,285 1027,302 1031,302 1035,318 1040,303 1045,318 1048,342 1052,350 1055,365 1060,357 1064,343 1071,357 1075,380 1081,366 1090,360 1092,357 1095,388 1099,375 1103,345 1107,338 1109,323 1111,327 1112,420 1114,590 1115,900 1116,1235 1120,1308 1121,1338 1123,1200 1125,850 1127,500 1127,285 1129,270 1133,278 1138,295 1143,340 1150,360 1157,395 1161,398 1164,431 1170,402 1173,410 1176,438 1180,420 1187,370 1193,348 1201,331 1209,326 1212,345 1215,373 1218,366 1226,382 1234,402 1238,370 1244,343 1250,342 1253,310 1255,287 1262,287 1267,279 1271,300 1275,286 1278,287 1282,310 1287,313 1291,305 1293,330 1294,572 1300,735 1302,1105 1304,900 1307,550 1309,340 1312,315 1317,297 1323,302 1329,313 1335,335 1340,320 1345,306 1350,313 1357,330 1363,333 1371,341 1376,343 1381,358 1387,345 1398,346 1404,368 1408,377 1413,399 1420,411 1426,402 1433,370 1440,345 1445,329 1449,330 1453,350 1456,390 1459,392 1463,441 1467,435 1471,408 1478,400 1482,384 1486,390 1493,385 1499,370 1503,387 1506,440 1508,459 1512,430 1518,375";
const heartRate =
  "71,1325 74,1285 77,1232 79,1235 82,1195 86,1115 89,930 91,820 93,812 98,735 103,675 107,685 110,670 112,680 115,652 117,662 119,652 123,700 125,725 127,728 129,742 134,732 140,728 145,705 152,712 156,745 158,760 160,757 164,748 166,745 170,705 173,705 176,720 182,665 184,675 186,663 190,675 194,660 197,620 200,575 202,585 204,570 208,598 213,562 218,535 221,522 230,525 232,530 234,524 236,532 241,515 250,515 258,525 270,525 275,533 284,532 289,525 294,525 299,543 303,535 306,543 313,520 319,526 323,514 326,515 330,528 336,543 342,495 346,487 352,486 359,468 369,468 373,480 380,460 386,461 393,481 399,468 407,503 412,486 418,492 424,486 431,485 435,468 442,488 446,480 450,488 458,478 463,488 466,487 471,468 480,470 492,470 497,480 506,460 512,480 518,468 523,480 532,460 536,470 541,478 547,502 555,478 562,488 570,475 578,462 585,478 590,468 597,479 603,478 607,461 611,470 620,450 628,455 637,441 650,443 655,451 675,453 680,461 690,445 693,450 696,442 700,453 709,455 714,480 723,452 735,452 738,468 745,460 748,470 755,455 760,443 766,460 772,443 775,452 782,432 790,443 797,455 804,460 807,452 820,453 822,460 830,461 836,470 843,462 849,433 858,452 869,445 872,452 882,452 890,470 897,458 906,432 917,432 925,415 934,414 938,426 945,413 951,440 958,470 961,460 964,470 968,455 975,462 984,490 990,460 998,475 1002,460 1007,478 1013,460 1022,458 1030,442 1036,452 1048,453 1053,470 1058,453 1063,470 1066,460 1072,470 1079,460 1086,461 1091,479 1098,480 1103,508 1105,507 1107,518 1108,700 1109,1000 1110,1195 1111,1202 1113,1120 1117,1008 1119,1035 1126,1010 1130,1050 1133,1065 1136,1052 1141,1090 1145,1110 1149,1093 1152,1120 1156,1070 1159,1020 1164,1048 1172,1010 1176,962 1179,980 1183,950 1188,935 1192,875 1197,918 1200,895 1204,852 1207,880 1211,892 1216,880 1222,905 1225,930 1230,920 1236,885 1240,928 1245,912 1250,885 1254,865 1258,875 1261,785 1265,830 1269,780 1272,697 1273,900 1275,1286 1278,1220 1284,1213 1288,1150 1292,1060 1296,1045 1300,1078 1302,1055 1306,1100 1310,1030 1313,1025 1316,1070 1320,1022 1326,985 1328,1000 1330,992 1334,1013 1337,980 1341,848 1344,850 1347,868 1351,842 1353,872 1356,848 1359,835 1362,825 1365,800 1370,768";

const elevationPts = roughen(
  [...parse(elevationA, [0, -1.2, 0.56027, 0.35915]), ...parse(elevationB, [878.5, -1.2, 0.56027, 0.35915])],
  1.3,
  1.4
);
const elevationPath = toPath(elevationPts);

const zones: [string, number, number, string][] = [
  ["5", 78, 127, "rgba(255,176,196,0.15)"],
  ["4", 127, 172, "rgba(237,204,177,0.15)"],
  ["3", 172, 217, "rgba(130,210,130,0.15)"],
  ["2", 217, 308, "rgba(124,190,237,0.15)"],
  ["1", 308, 471, "rgba(64,64,64,0.15)"],
];

const zoneTags: [string, string, number][] = [
  ["Zone 5", "0.0%", 77],
  ["Zone 4", "52.2%", 124],
  ["Zone 3", "18.1%", 169],
  ["Zone 2", "14.3%", 214],
  ["Zone 1", "15.4%", 306],
];

const splits: [string, number][] = [
  ["5.7", 256], ["5.4", 305], ["5.4", 302], ["5.3", 332], ["5.5", 294], ["5.7", 256],
  ["5.3", 335], ["5.2", 354], ["5.8", 230], ["5.7", 256], ["5.5", 283],
];

export default function App() {
  return (
    <>
      <GlobalStyle />
      <Page>
        <Header>
          <Title>Jogging Dashboard</Title>
        </Header>

        <Toolbar>
          <Field $gap={8}>
            <label htmlFor="file">Datei wählen:</label>
            <SelectBox>
              <FileSelect id="file" defaultValue="run">
                <option value="run">2025-10-02_FRA_Run_11.27Km.fit</option>
              </FileSelect>
              <svg width="13" height="8" viewBox="0 0 13 8" aria-hidden="true">
                <path d="M0 1h13L6.5 8z" fill="#999999" />
              </svg>
            </SelectBox>
          </Field>
          <Field $end $gap={12}>
            <span>Export SVG:</span>
            <ExportButton type="button">Summary Image</ExportButton>
          </Field>
        </Toolbar>

        <Stats>
          <div>
            <StatLabel>Total Distance</StatLabel>
            <StatValue>11.26 km</StatValue>
          </div>
          <div>
            <StatLabel>Total Time</StatLabel>
            <StatValue>01:01:58</StatValue>
          </div>
          <div>
            <StatLabel>Average Pace</StatLabel>
            <StatValue>5:30 min/km</StatValue>
          </div>
        </Stats>

        <MapPanel>
          <RouteMap />
          <Legend>
            <LegendItem><Dot $color="#ff9f66" $size={16} />Start</LegendItem>
            <LegendItem><Dot $color="#b5fb5c" $size={16} />Stop</LegendItem>
            <LegendItem><Dot $color="#42aee8" $size={22} />Hovered Point</LegendItem>
          </Legend>
        </MapPanel>

        <Plot
          title="Höhenprofil (relativ zum Ausgangswert: 0m)"
          height={530}
          box={[78, 78, 1704, 451]}
          xStart={110}
          xStep={262}
          xLabels={times}
          yTicks={[["20", 110], ["15", 156], ["10", 203], ["5", 250], ["0", 296], ["−5", 342], ["−10", 389], ["−15", 436]]}
          tickY={468}
          date={488}
          xTitle="Zeit"
          xTitleY={526}
          yTitle="Höhe relativ zum Start (m)"
        >
          <defs>
            <linearGradient id="relief" gradientUnits="userSpaceOnUse" x1="0" y1="96" x2="0" y2="431">
              <stop offset="0" stopColor="#2a5298" stopOpacity="0.75" />
              <stop offset="0.2" stopColor="#2a5298" stopOpacity="0.38" />
              <stop offset="0.36" stopColor="#2a5298" stopOpacity="0.12" />
              <stop offset="0.5" stopColor="#2a5298" stopOpacity="0" />
              <stop offset="0.65" stopColor="#2a5298" stopOpacity="0" />
              <stop offset="0.85" stopColor="#2a5298" stopOpacity="0.35" />
              <stop offset="1" stopColor="#2a5298" stopOpacity="0.75" />
            </linearGradient>
          </defs>
          <path d={`${elevationPath}V296H78Z`} fill="url(#relief)" />
          <Series d={elevationPath} color="#2a5298" />
          <Dashed y={296} from={78} to={1704} />
        </Plot>

        <Plot
          title="Abweichung von integriertem Durchschnittstempo"
          height={524}
          box={[90, 78, 1704, 440]}
          xStart={122}
          xStep={260}
          xLabels={times}
          yTicks={[["0.1", 129], ["0.05", 237], ["0", 345]]}
          tickSize={18}
          titleSize={22}
          tickY={460}
          date={484}
          xTitle="Zeit"
          xTitleY={525}
          yTitle="Abweichung (km)"
        >
          <Series d={toPath(roughen(parse(deviation, [0, 12, 1.12054, 0.33801]), 1.2, 1.6))} color="#636efa" />
          <Dashed y={345} from={90} to={1704} />
        </Plot>

        <Plot
          title="Tempo über die Zeit (geglättet) - Ø 10.59 km/h"
          height={602}
          box={[69, 71, 1704, 543]}
          xStart={101}
          xStep={263.7}
          xLabels={times}
          yTicks={[["12", 100], ["10", 174], ["8", 248], ["6", 321], ["4", 395], ["2", 469], ["0", 543]]}
          tickY={560}
          xTitle="Zeit"
          xTitleY={598}
          yTitle="Geschwindigkeit (km/h)"
        >
          <Series d={toPath(parse(speed, [0, 4.8, 1.12054, 0.39718]))} color="#4169e1" />
          <Dashed y={152} from={69} to={1704} />
        </Plot>

        <Plot
          title="Herzfrequenz über die Zeit (geglättete) - Ø 155 bpm (Range: 75-177)"
          height={518}
          box={[78, 78, 1704, 471]}
          xStart={109}
          xStep={258.5}
          xLabels={times}
          yTicks={[["200", 78], ["180", 139], ["160", 199], ["140", 259], ["120", 320], ["100", 380], ["80", 440]]}
          tickY={488}
          xTitle="Zeit"
          xTitleY={526}
          yTitle="Herzfrequenz (bpm)"
        >
          <Series d={toPath(parse(heartRate, [0, 12.3, 1.12054, 0.3338]))} color="#ff2f4a" />
          <Dashed y={213} from={78} to={1704} />
          {zones.map(([id, top, bottom, fill]) => (
            <rect key={id} x={78} y={top} width={1626} height={bottom - top} fill={fill} />
          ))}
          <g stroke="#808080" strokeWidth="1.3" fill="#000000" fillOpacity="0.5">
            {zoneTags.map(([name, , y]) => (
              <rect key={name} x={1656} y={y} width={48} height={41} />
            ))}
            <rect x={824} y={162} width={74} height={23} />
            <path d="M865 185L873 211" fill="none" />
            <path d="M870 206l3 6l1 -7z" fill="#808080" fillOpacity="1" />
          </g>
          <g fontSize="13">
            {zoneTags.map(([name, share, y]) => (
              <React.Fragment key={name}>
                <text x={1658} y={y + 16}>{name}</text>
                <text x={1658} y={y + 33}>{share}</text>
              </React.Fragment>
            ))}
            <text x={861} y={178} fontSize="14" textAnchor="middle">Ø 155 bpm</text>
          </g>
        </Plot>

        <Plot
          title="Tempo je Kilometer - Ø 5:30 min/km"
          height={556}
          box={[59, 64, 1704, 484]}
          xStart={59}
          xStep={146}
          xLabels={["0", "1", "2", "3", "4", "5", "6", "7", "8", "9", "10", "11"]}
          yTicks={[["6", 73], ["5", 141], ["4", 210], ["3", 278], ["2", 347], ["1", 415], ["0", 484]]}
          tickY={501}
          xTitle="Distanz (km)"
          xTitleY={539}
          yTitle="Minuten pro km"
        >
          {splits.map(([, top], i) => (
            <rect key={i} x={59 + i * 146} y={4.5 + top * 0.35245} width={145.6} height={484 - 4.5 - top * 0.35245} fill="#114f88" />
          ))}
          <rect x={1665} y={96} width={39} height={388} fill="#114f88" />
          <g fontSize="16" fillOpacity="0.85" textAnchor="middle">
            {splits.map(([pace, top], i) => (
              <text key={i} x={132 + i * 146} y={27 + top * 0.35245}>{pace} min/km</text>
            ))}
            <text transform="translate(1678 142) rotate(90)">5.7 min/km</text>
          </g>
          <Dashed y={107} from={59} to={1704} />
        </Plot>

        <DrawerButton type="button" aria-label="Menü öffnen">
          <svg width="34" height="34" viewBox="0 0 34 34" fill="none" stroke="#7b4cc9" strokeWidth="2.6" strokeLinecap="round" strokeLinejoin="round" aria-hidden="true">
            <circle cx="17" cy="17" r="15" />
            <path d="M15 12l-5.500 5 5.500 5M23.500 12l-5.500 5 5.500 5" />
          </svg>
        </DrawerButton>
      </Page>
    </>
  );
}
